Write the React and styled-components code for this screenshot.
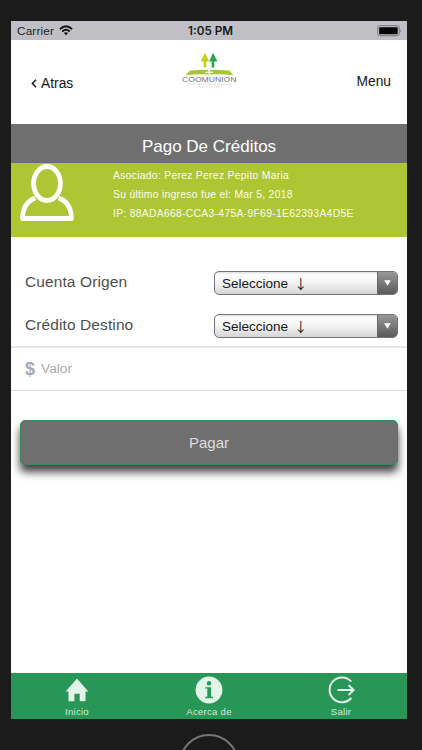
import React from 'react';
import styled, { createGlobalStyle } from 'styled-components';

const GlobalStyle = createGlobalStyle`
  * {
    box-sizing: border-box;
  }

  body {
    margin: 0;
    background: #1b1b1b;
    overflow: hidden;
  }
`;

const Label = ({ children, ...props }) => (
  <Text {...props}>{children}</Text>
);

const SelectField = ({ label, value }) => {
  return (
    <FieldRow>
      <Label $size="15.5px" $color="#505050" $spacing="0.1px">{label}</Label>
      <Select type="button">
        <SelectValue>
          {value}
          <Arrow>↓</Arrow>
        </SelectValue>
        <SelectToggle>
          <svg width="7" height="6" viewBox="0 0 7 6">
            <path d="M0.2 0.3H6.8L3.5 5.8Z" fill="#fff" />
          </svg>
        </SelectToggle>
      </Select>
    </FieldRow>
  );
};

const Logo = () => (
  <svg width="56" height="38" viewBox="0 0 56 38">
    <path d="M24 0.800L28.200 9.500H25.300V15.500H22.700V9.500H19.600Z" fill="#c5d016" />
    <path d="M32 0.800L36.400 9.500H33.300V15.500H30.700V9.500H28.200Z" fill="#2aa352" />
    <path d="M9 18.500L24 17.800Q27 17.800 28.300 19Q30 17.800 33 17.800L48 18.500L52.500 23.200Q38 21.500 28.500 22.500Q18 21.500 4.500 23.200Z" fill="#a9c52f" />
    <path d="M24 20.300H32M28.200 16.500V22.500" stroke="#fff" strokeWidth="1.100" />
    <text x="1" y="29.700" textLength="54.500" lengthAdjust="spacingAndGlyphs" fontSize="7" fill="#747474" fontFamily="Liberation Sans, sans-serif">COOMUNION</text>
    <path d="M6 32.200H50" stroke="#dadada" strokeWidth="1" strokeDasharray="5 1 3 1" />
    <path d="M16 34.800H41" stroke="#e2e2e2" strokeWidth="1" strokeDasharray="4 1 6 1" />
  </svg>
);

const WifiIcon = () => (
  <svg width="14" height="11" viewBox="0 0 14 11">
    <g fill="none" stroke="#111" strokeWidth="1.9">
      <path d="M0.900 4.100Q7 -1.500 13.100 4.100" />
      <path d="M3.200 6.500Q7 3.100 10.800 6.500" />
    </g>
    <path d="M4.900 8.100Q7 6.500 9.100 8.100L7 10.300Z" fill="#111" />
  </svg>
);

const BatteryIcon = () => (
  <svg width="25" height="12" viewBox="0 0 25 12">
    <rect x="0.800" y="0.700" width="21.400" height="10" rx="2" fill="none" stroke="#77777d" strokeWidth="1" />
    <rect x="2.200" y="2.200" width="18.500" height="7" rx="0.800" fill="#050505" />
    <path d="M23.200 4Q25 5.700 23.200 7.400Z" fill="#77777d" />
  </svg>
);

const UserIcon = () => (
  <svg width="54" height="59" viewBox="0 0 54 59">
    <g fill="none" stroke="#fff" strokeWidth="4.800" strokeLinejoin="round">
      <ellipse cx="27" cy="20.500" rx="13.400" ry="17" />
      <path d="M15.300 35C7 38 2.700 45.500 2.500 55.500H51.500C51.300 45.500 47 38 38.700 35" />
    </g>
  </svg>
);

const HomeIcon = () => (
  <svg width="24" height="24" viewBox="0 0 24 24">
    <path d="M12 0.500L23.300 13.500H20.500V23.200H14.700V15.800H9.400V23.200H3.500V13.500H0.700Z" fill="#e2f3e8" />
  </svg>
);

const InfoIcon = () => (
  <svg width="28" height="28" viewBox="0 0 28 28">
    <circle cx="14" cy="14" r="13.400" fill="#e2f3e8" />
    <circle cx="14" cy="7.200" r="2.200" fill="#279656" />
    <path d="M10.300 11.200H16V20.800H18V22.200H10.200V20.800H12.300V12.500H10.300Z" fill="#279656" />
  </svg>
);

const ExitIcon = () => (
  <svg width="28" height="28" viewBox="0 0 28 28">
    <g fill="none" stroke="#e2f3e8" strokeWidth="2">
      <path d="M24.300 5.600A12.400 12.400 0 1 0 24.300 22" />
      <path d="M10.500 14H26M21.500 9L26.600 14L21.500 19" />
    </g>
  </svg>
);

const App = () => {
  return (
    <>
      <GlobalStyle />
      <Device>
        <Screen>
          <StatusBar>
            <Carrier>
              <Label $size="11.7px" $color="#222" $spacing="0.2px">Carrier</Label>
              <WifiIcon />
            </Carrier>
            <Clock>1:05 PM</Clock>
            <Battery>
              <BatteryIcon />
            </Battery>
          </StatusBar>
          <Header>
            <Back>
              <svg width="6" height="9" viewBox="0 0 6 9">
                <path d="M5 0.700L1.300 4.500L5 8.300" fill="none" stroke="#111" strokeWidth="1.400" />
              </svg>
              <Label $size="13.8px">Atras</Label>
            </Back>
            <Logo />
            <Menu>
              <Label $size="13.8px">Menu</Label>
            </Menu>
          </Header>
          <Title>Pago De Créditos</Title>
          <UserPanel>
            <UserIcon />
            <UserData>
              <Label $size="10.4px" $color="#fbfdf0" $spacing="0.27px">Asociado: Perez Perez Pepito Maria</Label>
              <Label $size="10.4px" $color="#fbfdf0" $spacing="0.27px">Su último ingreso fue el: Mar 5, 2018</Label>
              <Label $size="10.4px" $color="#fbfdf0" $spacing="0.27px">IP: 88ADA668-CCA3-475A-9F69-1E62393A4D5E</Label>
            </UserData>
          </UserPanel>
          <Form>
            <SelectField label="Cuenta Origen" value="Seleccione" />
            <SelectField label="Crédito Destino" value="Seleccione" />
          </Form>
          <AmountRow>
            <Dollar>$</Dollar>
            <Label $size="13.7px" $color="#aaa">Valor</Label>
          </AmountRow>
          <PayButton type="button">Pagar</PayButton>
          <TabBar>
            <Tab>
              <TabIcon><HomeIcon /></TabIcon>
              <Label $size="9.6px" $color="#d4ecdd" $spacing="0.25px">Inicio</Label>
            </Tab>
            <Tab>
              <TabIcon><InfoIcon /></TabIcon>
              <Label $size="9.6px" $color="#d4ecdd" $spacing="0.25px">Acerca de</Label>
            </Tab>
            <Tab>
              <TabIcon><ExitIcon /></TabIcon>
              <Label $size="9.6px" $color="#d4ecdd" $spacing="0.25px">Salir</Label>
            </Tab>
          </TabBar>
        </Screen>
        <HomeButton />
      </Device>
    </>
  );
};

export default App;

const Text = styled.span`
  font-size: ${({ $size }) => $size};
  color: ${({ $color }) => $color || '#161616'};
  letter-spacing: ${({ $spacing }) => $spacing || 'normal'};
  white-space: nowrap;
`;

const Device = styled.div`
  width: 422px;
  height: 750px;
  padding: 21px 15px 0 11px;
  background: #1b1b1b;
  font-family: 'Liberation Sans', Arial, sans-serif;
  overflow: hidden;
`;

const Screen = styled.div`
  display: flex;
  flex-direction: column;
  height: 698px;
  background: #fff;
`;

const StatusBar = styled.div`
  display: grid;
  grid-template-columns: 1fr auto 1fr;
  align-items: center;
  height: 19px;
  padding: 0 5px 0 6px;
  background: #c0bfc6;
`;

const Carrier = styled.div`
  display: flex;
  align-items: center;
  gap: 5px;
`;

const Clock = styled.div`
  padding-left: 2px;
  font-family: Inter, sans-serif;
  font-size: 11.7px;
  font-weight: 600;
  color: #161616;
`;

const Battery = styled.div`
  display: flex;
  justify-content: flex-end;
`;

/* ===== HEADER ===== */
const Header = styled.div`
  display: grid;
  grid-template-columns: 1fr 56px 1fr;
  height: 84px;
  padding: 12px 16px 0;
`;

const Back = styled.div`
  display: flex;
  align-items: center;
  align-self: start;
  gap: 4px;
  height: 20px;
  margin: 21px 0 0 4px;
`;

const Menu = styled.div`
  justify-self: end;
  height: 20px;
  margin-top: 20px;
  line-height: 17px;
`;

const Title = styled.div`
  height: 39px;
  padding-top: 2px;
  line-height: 41px;
  font-size: 17px;
  text-align: center;
  color: #fff;
  background: #6f6f6f;
`;

const UserPanel = styled.div`
  display: flex;
  gap: 39px;
  height: 74px;
  padding-left: 9px;
  background: #aec634;
`;

const UserData = styled.div`
  display: flex;
  flex-direction: column;
  padding-top: 3px;
  line-height: 19px;
`;

/* ===== FORM ===== */
const Form = styled.div`
  height: 109px;
  padding: 33px 9px 0 14px;
`;

const FieldRow = styled.div`
  display: flex;
  align-items: center;
  justify-content: space-between;
  height: 25px;
  margin-bottom: 18px;

  > span {
    padding-bottom: 2px;
  }
`;

const Select = styled.button`
  display: flex;
  width: 184px;
  height: 24px;
  padding: 0;
  border: 1px solid #747474;
  border-radius: 5px;
  font-family: inherit;
  background: linear-gradient(#dedede, #fff 12%, #f3f3f3 50%, #d5d5d5);
  overflow: hidden;
`;

const SelectValue = styled.span`
  display: flex;
  flex: 1;
  align-items: center;
  gap: 6px;
  padding: 2px 0 0 7px;
  font-size: 13.5px;
  line-height: 21px;
  color: #161616;
`;

const Arrow = styled.span`
  padding-bottom: 2px;
  font-family: 'Noto Sans CJK JP', sans-serif;
  line-height: 18px;
`;

const SelectToggle = styled.span`
  display: flex;
  align-items: center;
  justify-content: center;
  width: 20px;
  height: 22px;
  border-left: 1px solid #666;
  background: linear-gradient(#989898, #5b5b5b);
`;

const AmountRow = styled.div`
  display: flex;
  align-items: center;
  gap: 6px;
  height: 45px;
  padding: 0 14px 2px;
  border-top: 2px solid #e6e6e6;
  border-bottom: 1px solid #dcdcdc;
`;

const Dollar = styled.span`
  padding-top: 3px;
  font-size: 18px;
  font-weight: bold;
  color: #aaa;
`;

const PayButton = styled.button`
  height: 45px;
  margin: 29px 9px 0;
  padding: 0;
  border: 1px solid #35895a;
  border-radius: 5px;
  font-family: inherit;
  font-size: 15px;
  color: #dedede;
  background: #6f6f6f;
  box-shadow: 0 7px 8px rgba(0, 0, 0, 0.75);
`;

/* ===== FOOTER ===== */
const TabBar = styled.div`
  display: grid;
  grid-template-columns: repeat(3, 1fr);
  height: 46px;
  margin-top: auto;
  background: #279656;
`;

const Tab = styled.div`
  display: flex;
  flex-direction: column;
  align-items: center;
  line-height: 11px;
`;

const TabIcon = styled.div`
  display: flex;
  align-items: center;
  height: 33px;
`;

const HomeButton = styled.div`
  width: 60px;
  height: 60px;
  margin: 15px auto 0;
  border: 2px solid #777;
  border-radius: 50%;
`;
